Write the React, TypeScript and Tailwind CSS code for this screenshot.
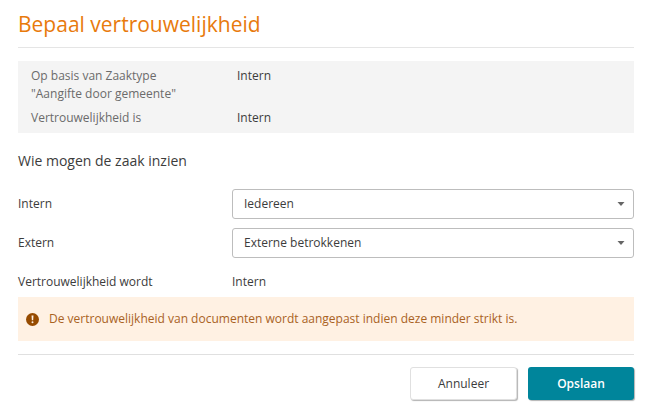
import type { ReactNode } from 'react';

const internOptions = ['Iedereen', 'Afdeling', 'Behandelaars'];
const externOptions = ['Externe betrokkenen', 'Niemand'];

/** One line of the summary: a muted label with its value in the second column. */
function SummaryRow({ label, value }: { label: ReactNode; value: string }) {
  return (
    <div className="flex">
      <dt className="w-[206px] shrink-0 text-[#6b6b6b]">{label}</dt>
      <dd>{value}</dd>
    </div>
  );
}

function SelectField({ id, label, options }: { id: string; label: string; options: string[] }) {
  return (
    <div className="flex">
      <label htmlFor={id} className="w-[214px] shrink-0 pt-[6px]">
        {label}
      </label>
      <div className="relative flex-1">
        <select
          id={id}
          className="block h-[30px] w-full appearance-none rounded-[3px] border border-[#bdbdbd] bg-white pr-8 pl-[11px]"
        >
          {options.map((option) => (
            <option key={option}>{option}</option>
          ))}
        </select>
        <svg viewBox="0 0 8 4" className="pointer-events-none absolute top-[13px] right-[9px] h-1 w-2 fill-[#666]" aria-hidden="true">
          <path d="M0.5 0h7L4 4z" />
        </svg>
      </div>
    </div>
  );
}

function AlertIcon() {
  return (
    <svg viewBox="0 0 12 12" className="size-[13px] shrink-0" aria-hidden="true">
      <circle cx="6" cy="6" r="6" fill="#964b00" />
      <path d="M5.1 2.4h1.8l-.3 4.2H5.4z" fill="#fff1e3" />
      <circle cx="6" cy="8.5" r="0.9" fill="#fff1e3" />
    </svg>
  );
}

export default function App() {
  return (
    <form
      className="bg-white pt-2 pr-[14px] pb-4 pl-[18px] font-['Open_Sans',sans-serif] text-[12px] leading-[18px] text-[#3c3c3c]"
      onSubmit={(e) => e.preventDefault()}
    >
      <h1 className="border-b border-[#e5e5e5] pb-[7px] text-[21px] leading-[32px] text-[#e87a0c]">Bepaal vertrouwelijkheid</h1>

      <dl className="mt-[13px] flex flex-col gap-[6px] bg-[#f4f4f4] px-[13px] py-[6px]">
        <SummaryRow
          label={
            <>
              Op basis van Zaaktype
              <br />
              "Aangifte door gemeente"
            </>
          }
          value="Intern"
        />
        <SummaryRow label="Vertrouwelijkheid is" value="Intern" />
      </dl>

      <h2 className="mt-4 text-[14px] leading-[24px]">Wie mogen de zaak inzien</h2>

      <div className="mt-4 flex flex-col gap-[9px]">
        <SelectField id="intern" label="Intern" options={internOptions} />
        <SelectField id="extern" label="Extern" options={externOptions} />
      </div>

      <div className="mt-[15px] flex">
        <span className="w-[214px] shrink-0">Vertrouwelijkheid wordt</span>
        <output htmlFor="intern extern">Intern</output>
      </div>

      <div role="alert" className="mt-[6px] flex items-center gap-[10px] bg-[#fff1e3] px-2 py-[13px] text-[#a9621f]">
        <AlertIcon />
        <p>De vertrouwelijkheid van documenten wordt aangepast indien deze minder strikt is.</p>
      </div>

      <div className="mt-[13px] flex justify-end gap-[11px] border-t border-[#e0e0e0] pt-3">
        <button
          type="button"
          className="h-[33px] w-[107px] rounded-[3px] border border-[#e0e0e0] bg-white shadow-[1px_1px_1px_rgba(0,0,0,0.3)]"
        >
          Annuleer
        </button>
        <button
          type="submit"
          className="h-[33px] w-[106px] rounded-[3px] bg-[#00859b] font-semibold text-white shadow-[1px_1px_1px_rgba(0,0,0,0.3)]"
        >
          Opslaan
        </button>
      </div>
    </form>
  );
}
